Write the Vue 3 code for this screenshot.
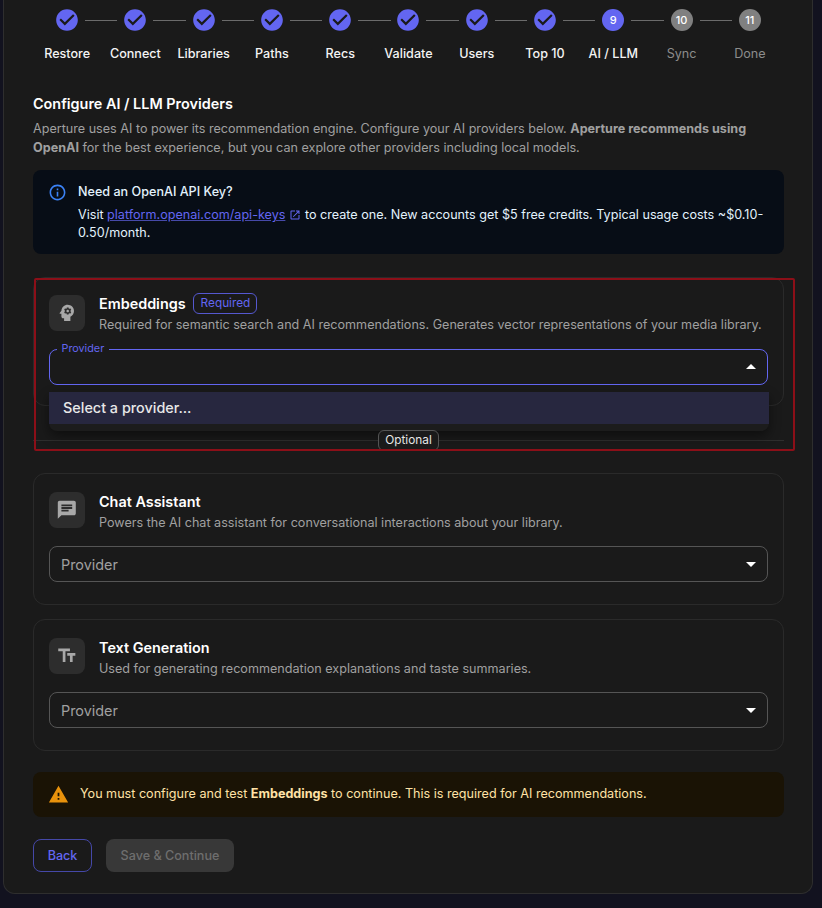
<script setup>
const steps = [
  { label: 'Restore', state: 'done' },
  { label: 'Connect', state: 'done' },
  { label: 'Libraries', state: 'done' },
  { label: 'Paths', state: 'done' },
  { label: 'Recs', state: 'done' },
  { label: 'Validate', state: 'done' },
  { label: 'Users', state: 'done' },
  { label: 'Top 10', state: 'done' },
  { label: 'AI / LLM', state: 'active', n: 9 },
  { label: 'Sync', state: 'todo', n: 10 },
  { label: 'Done', state: 'todo', n: 11 }
]
const check = 'M12 2C6.48 2 2 6.48 2 12s4.48 10 10 10 10-4.48 10-10S17.52 2 12 2zm-2 15-5-5 1.41-1.41L10 14.17l7.59-7.59L19 8l-9 9z'
const providers = [
  {
    title: 'Chat Assistant',
    desc: 'Powers the AI chat assistant for conversational interactions about your library.',
    icon: 'M20 2H4c-1.1 0-1.99.9-1.99 2L2 22l4-4h14c1.1 0 2-.9 2-2V4c0-1.1-.9-2-2-2zM6 9h12v2H6V9zm8 5H6v-2h8v2zm4-6H6V6h12v2z'
  },
  {
    title: 'Text Generation',
    desc: 'Used for generating recommendation explanations and taste summaries.',
    icon: 'M2.5 4v3h5v12h3V7h5V4h-13zm19 5h-9v3h3v7h3v-7h3V9z'
  }
]
</script>

<template>
  <div class="page">
    <main class="panel">
      <ol class="stepper">
        <li v-for="(s, i) in steps" :key="s.label" class="step" :class="s.state">
          <span v-if="i > 0" class="connector"></span>
          <svg v-if="s.state === 'done'" class="step-icon" viewBox="0 0 24 24">
            <circle cx="12" cy="12" r="8" fill="#1a1a1a" />
            <path :d="check" fill="#6366f1" />
          </svg>
          <span v-else class="step-num">{{ s.n }}</span>
          <span class="step-label">{{ s.label }}</span>
        </li>
      </ol>

      <h2 class="heading">Configure AI / LLM Providers</h2>
      <p class="intro">
        Aperture uses AI to power its recommendation engine. Configure your AI providers below.
        <strong>Aperture recommends using OpenAI</strong> for the best experience, but you can explore other providers including local models.
      </p>

      <section class="info">
        <svg class="info-icon" viewBox="0 0 24 24"><path fill="#3b82f6" d="M11 7h2v2h-2zm0 4h2v6h-2zm1-9C6.48 2 2 6.48 2 12s4.48 10 10 10 10-4.48 10-10S17.52 2 12 2zm0 18c-4.41 0-8-3.59-8-8s3.59-8 8-8 8 3.59 8 8-3.59 8-8 8z" /></svg>
        <div>
          <div class="info-title">Need an OpenAI API Key?</div>
          <div class="info-body">
            Visit <a class="link">platform.openai.com/api-keys</a>
            <svg class="ext" viewBox="0 0 24 24"><path fill="#6366f1" d="M19 19H5V5h7V3H5c-1.11 0-2 .9-2 2v14c0 1.1.89 2 2 2h14c1.1 0 2-.9 2-2v-7h-2v7zM14 3v2h3.59l-9.83 9.83 1.41 1.41L19 6.41V10h2V3h-7z" /></svg>
            to create one. New accounts get $5 free credits. Typical usage costs ~$0.10-0.50/month.
          </div>
        </div>
      </section>

      <div class="required-zone">
        <section class="card first">
          <header class="card-head">
            <span class="icon-box">
              <svg viewBox="0 0 24 24"><path fill="#a8a8a8" d="M13 8.57c-.79 0-1.43.64-1.43 1.43s.64 1.43 1.43 1.43 1.43-.64 1.43-1.43-.64-1.43-1.43-1.43z" /><path fill="#a8a8a8" d="M13 3C9.25 3 6.2 5.94 6.02 9.64L4.1 12.2c-.25.33-.01.8.4.8H6v3c0 1.1.9 2 2 2h1v3h7v-4.68c2.36-1.12 4-3.53 4-6.32 0-3.87-3.13-7-7-7zm3 7c0 .13-.01.26-.02.39l.83.66c.08.06.1.16.05.25l-.8 1.39c-.05.09-.16.12-.24.09l-.99-.4c-.21.16-.43.29-.67.39L14 13.83c-.01.1-.1.17-.2.17h-1.6c-.1 0-.18-.07-.2-.17l-.15-1.06c-.25-.1-.47-.23-.68-.39l-.99.4c-.09.03-.2 0-.25-.09l-.8-1.39c-.05-.08-.03-.19.05-.25l.84-.66c-.01-.13-.02-.26-.02-.39s.02-.27.04-.39l-.85-.66c-.08-.06-.1-.16-.05-.26l.8-1.38c.05-.09.15-.12.24-.09l1 .4c.2-.15.43-.29.67-.39L12 6.17c.02-.1.1-.17.2-.17h1.6c.1 0 .18.07.2.17l.15 1.06c.24.1.46.23.67.39l1-.4c.09-.03.2 0 .24.09l.8 1.38c.05.09.03.2-.05.26l-.85.66c.03.12.04.25.04.39z" /></svg>
            </span>
            <div class="head-text">
              <div class="title-row">
                <h3 class="card-title">Embeddings</h3>
                <span class="chip-required">Required</span>
              </div>
              <p class="card-desc">Required for semantic search and AI recommendations. Generates vector representations of your media library.</p>
            </div>
          </header>
          <div class="select focused">
            <span class="float-label">Provider</span>
            <svg class="caret" viewBox="0 0 24 24"><path fill="#fff" d="M7 14l5-5 5 5z" /></svg>
            <div class="menu"><div class="menu-item">Select a provider...</div></div>
          </div>
        </section>

        <div class="divider"><span class="chip-optional">Optional</span></div>
        <div class="annotation"></div>
      </div>

      <section v-for="p in providers" :key="p.title" class="card spaced">
        <header class="card-head">
          <span class="icon-box">
            <svg viewBox="0 0 24 24"><path fill="#a8a8a8" :d="p.icon" /></svg>
          </span>
          <div>
            <h3 class="card-title">{{ p.title }}</h3>
            <p class="card-desc">{{ p.desc }}</p>
          </div>
        </header>
        <div class="select">
          <span class="placeholder">Provider</span>
          <svg class="caret" viewBox="0 0 24 24"><path fill="#fff" d="M7 10l5 5 5-5z" /></svg>
        </div>
      </section>

      <section class="warn">
        <svg class="warn-icon" viewBox="0 0 24 24"><path fill="#e8920c" d="M1 21h22L12 2 1 21zm12-3h-2v-2h2v2zm0-4h-2v-4h2v4z" /></svg>
        <span class="warn-text">You must configure and test <strong>Embeddings</strong> to continue. This is required for AI recommendations.</span>
      </section>

      <div class="actions">
        <button class="btn back">Back</button>
        <button class="btn save">Save &amp; Continue</button>
      </div>
    </main>
  </div>
</template>

<style>
html, body { margin: 0; background: #12121f; }
</style>

<style scoped>
* { box-sizing: border-box; }
.page {
  height: 908px;
  padding: 0 9px 14px 3px;
  overflow: hidden;
  font-family: Inter, "Liberation Sans", sans-serif;
  color: #fff;
}
.panel {
  height: 894px;
  background: #1a1a1a;
  border: 1px solid #2e2e2e;
  border-top: 0;
  border-radius: 0 0 12px 12px;
  padding: 9px 28px 0 29px;
}
.stepper {
  display: grid;
  grid-template-columns: repeat(11, 1fr);
  list-style: none;
  margin: 0;
  padding: 0;
}
.step {
  position: relative;
  display: flex;
  flex-direction: column;
  align-items: center;
}
.connector {
  position: absolute;
  top: 11px;
  left: calc(-50% + 18px);
  right: calc(50% + 18px);
  height: 1px;
  background: #6b6b6b;
}
.step-icon { width: 26px; height: 26px; margin: -2px 0 -2px; display: block; }
.step-num {
  width: 22px;
  height: 22px;
  border-radius: 50%;
  display: flex;
  align-items: center;
  justify-content: center;
  font-size: 11px;
  font-weight: 500;
  background: #6366f1;
  padding-bottom: 1px;
}
.step.todo .step-num { background: #808080; }
.step-label {
  margin-top: 15px;
  font-size: 12.6px;
  line-height: 16px;
  font-weight: 500;
  color: #f4f4f4;
  white-space: nowrap;
}
.step.todo .step-label { font-weight: 400; color: #8c8c8c; }
.heading {
  margin: 32px 0 0;
  font-size: 14.4px;
  line-height: 20px;
  font-weight: 600;
}
.intro {
  margin: 6px 0 0;
  font-size: 12.6px;
  line-height: 18.9px;
  color: #a0a0a0;
}
.intro strong { font-weight: 700; }
.info {
  display: flex;
  gap: 11px;
  margin-top: 12.2px;
  height: 84px;
  padding: 14px 16px 0 15px;
  background: #070d16;
  border-radius: 8px;
  font-size: 12.6px;
  color: #e3f2fd;
}
.info-icon { width: 19px; height: 19px; flex: none; margin-top: -1px; }
.info-title { font-weight: 500; line-height: 16px; }
.info-body { margin-top: 6px; line-height: 17.64px; }
.link { color: #6366f1; text-decoration: underline; text-decoration-color: #4649a8; }
.ext { width: 12px; height: 12px; vertical-align: -2px; margin: 0 0 0 4px; }
.required-zone { position: relative; margin-top: 23px; }
.card {
  border: 1px solid #2a2a2a;
  border-radius: 12px;
  padding: 18px 15px 0;
}
.card.first { height: 129px; padding-top: 17px; }
.card.spaced { margin-top: 14px; height: 132px; }
.required-zone + .card { margin-top: 22px; }
.card-head { display: flex; gap: 14px; height: 36px; }
.head-text { margin-top: -2px; }
.icon-box {
  flex: none;
  width: 36px;
  height: 36px;
  border-radius: 8px;
  background: #2d2d2d;
  display: flex;
  align-items: center;
  justify-content: center;
}
.icon-box svg { width: 21.6px; height: 21.6px; }
.title-row { display: flex; align-items: center; gap: 7px; }
.card-title { margin: 0; font-size: 14.4px; line-height: 20px; font-weight: 600; }
.card-desc { margin: 2px 0 0; font-size: 12.6px; line-height: 18px; color: #a0a0a0; white-space: nowrap; }
.chip-required {
  font-size: 11.8px;
  line-height: 19px;
  padding: 0 6px 0 7px;
  color: #6366f1;
  border: 1px solid #5558d0;
  border-radius: 6px;
}
.select {
  position: relative;
  height: 36px;
  margin-top: 18px;
  border: 1px solid #555;
  border-radius: 8px;
  display: flex;
  align-items: center;
  padding-left: 11px;
}
.select.focused { border-color: #6366f1; }
.placeholder { font-size: 14.4px; color: #a0a0a0; }
.float-label {
  position: absolute;
  left: 6.5px;
  top: -8px;
  padding: 0 5px;
  font-size: 10.8px;
  line-height: 13px;
  background: #1a1a1a;
  color: #6366f1;
}
.caret { position: absolute; right: 4px; top: 5px; width: 24px; height: 24px; }
.menu {
  position: absolute;
  left: -1px;
  right: -2px;
  top: 42px;
  height: 39px;
  background: #1c1c1c;
  border-radius: 0 0 8px 8px;
  box-shadow: 0 5px 12px rgba(0, 0, 0, 0.45);
  z-index: 2;
}
.menu-item {
  height: 32px;
  padding-left: 14px;
  background: #27273f;
  font-size: 14.4px;
  line-height: 32px;
  font-weight: 500;
  color: #e8e8e8;
}
.divider {
  position: relative;
  height: 21px;
  margin-top: 24px;
  display: flex;
  justify-content: center;
  align-items: center;
}
.divider::before {
  content: "";
  position: absolute;
  left: 0;
  right: 0;
  top: 10px;
  height: 1px;
  background: #2e2e2e;
}
.chip-optional {
  position: relative;
  height: 21px;
  width: 61px;
  text-align: center;
  font-size: 11.8px;
  line-height: 19px;
  color: #e6e6e6;
  background: #1a1a1a;
  border: 1px solid #555;
  border-radius: 6px;
  z-index: 3;
}
.annotation {
  position: absolute;
  left: 1px;
  top: 1px;
  width: 761px;
  height: 173px;
  border: 2px solid #8c0f18;
  border-radius: 2px;
  pointer-events: none;
  z-index: 4;
}
.warn {
  display: flex;
  align-items: center;
  gap: 10px;
  height: 45px;
  margin-top: 21px;
  padding: 0 16px 0 15px;
  background: #1a1305;
  border-radius: 8px;
  font-size: 12.6px;
  color: #ffe2a6;
}
.warn strong { font-weight: 700; }
.warn-icon { width: 21px; height: 21px; flex: none; }
.warn-text { padding-bottom: 2px; padding-left: 1px; }
.actions { display: flex; gap: 14px; margin-top: 22px; }
.btn {
  height: 33px;
  border-radius: 8px;
  font-family: inherit;
  font-size: 12.6px;
  font-weight: 500;
  padding: 0;
}
.back { width: 59px; background: transparent; border: 1px solid #4548a8; color: #6366f1; }
.save { width: 128px; background: #383838; border: 0; color: #6e6e6e; }
</style>
